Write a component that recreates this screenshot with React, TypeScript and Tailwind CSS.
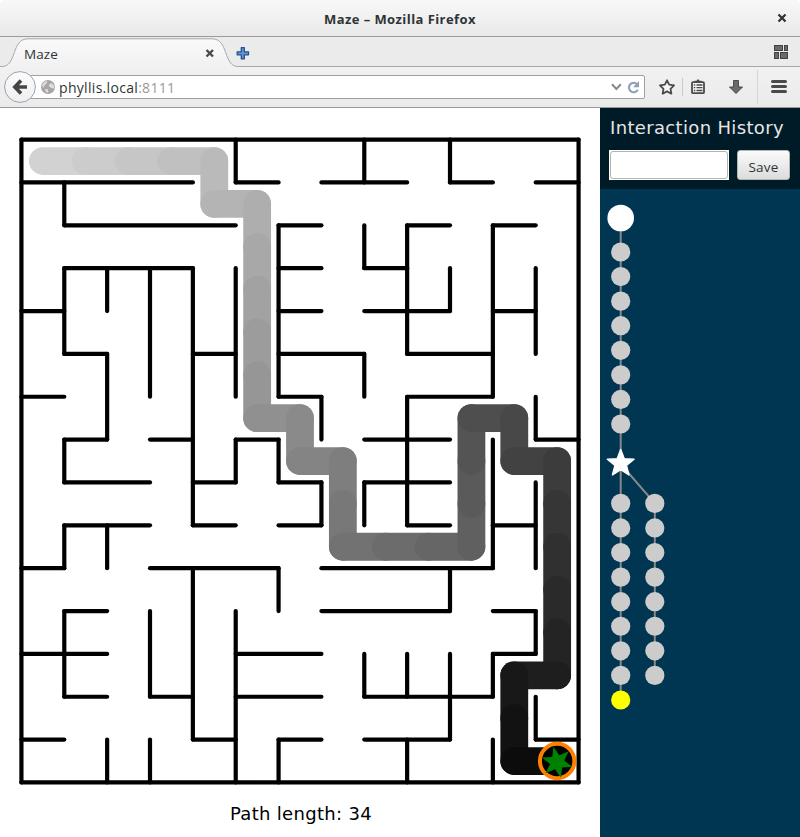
import React from "react";

const STEP = 42.857;
const X0 = 21.43;
const Y0 = 31.6;

const horizontal: number[][][] = [
  [[0, 13]],
  [[0, 4], [5, 6], [7, 9], [10, 11], [12, 13]],
  [[1, 5], [6, 7], [9, 10], [11, 12]],
  [[1, 4], [6, 7], [8, 9]],
  [[0, 1], [6, 7], [8, 10], [11, 12]],
  [[1, 2], [4, 5], [6, 8], [9, 11]],
  [[0, 1], [6, 7], [9, 11]],
  [[1, 2], [3, 4], [5, 6], [8, 10], [12, 13]],
  [[1, 3], [4, 5], [6, 7], [8, 10]],
  [[1, 3], [4, 5], [6, 7], [9, 10], [11, 12]],
  [[0, 1], [3, 6], [7, 11]],
  [[1, 2], [7, 10], [11, 12]],
  [[0, 2], [5, 7], [11, 12]],
  [[1, 2], [3, 4], [5, 7], [8, 11]],
  [[0, 1], [4, 5], [6, 7], [8, 10], [12, 13]],
  [[0, 13]],
];

const vertical: number[][][] = [
  [[0, 15]],
  [[1, 2], [3, 5], [7, 8], [9, 10], [11, 13]],
  [[3, 4], [5, 7], [9, 10], [14, 15]],
  [[3, 6], [11, 13], [14, 15]],
  [[3, 9], [10, 14]],
  [[0, 1], [3, 6], [7, 8], [11, 15]],
  [[2, 6], [7, 8], [10, 11], [14, 15]],
  [[6, 7], [8, 9]],
  [[0, 1], [2, 3], [5, 6], [8, 9], [12, 13]],
  [[2, 5], [6, 9], [12, 13], [14, 15]],
  [[0, 1], [3, 4], [10, 11], [12, 14]],
  [[2, 6], [7, 10], [12, 13], [14, 15]],
  [[3, 5], [6, 7], [8, 10], [11, 12], [13, 14]],
  [[0, 15]],
];

const MOVES = "RRRRDRDDDDDRDRDDRRRUUURDRDDDDDLDDR";

function walk() {
  const cells = [[0, 0]];
  for (const m of MOVES) {
    const [x, y] = cells[cells.length - 1];
    cells.push([x + (m === "R" ? 1 : m === "L" ? -1 : 0), y + (m === "D" ? 1 : m === "U" ? -1 : 0)]);
  }
  return cells;
}

const px = (x: number) => X0 + x * STEP;
const py = (y: number) => Y0 + y * STEP;

function starPoints(cx: number, cy: number, n: number, outer: number, inner: number, rot: number) {
  const pts: string[] = [];
  for (let i = 0; i < n * 2; i++) {
    const r = i % 2 ? inner : outer;
    const a = rot + (Math.PI * i) / n;
    pts.push(`${(cx + r * Math.sin(a)).toFixed(2)},${(cy - r * Math.cos(a)).toFixed(2)}`);
  }
  return pts.join(" ");
}

function Maze() {
  const cells = walk();
  const gx = px(12.5);
  const gy = py(14.5);
  return (
    <svg width="600" height="690" viewBox="0 0 600 690" className="block">
      <g stroke="#000" strokeWidth="4.2" strokeLinecap="round">
        {horizontal.flatMap((row, y) =>
          row.map(([a, b]) => <line key={`h${y}-${a}`} x1={px(a)} x2={px(b)} y1={py(y)} y2={py(y)} />),
        )}
        {vertical.flatMap((col, x) =>
          col.map(([a, b]) => <line key={`v${x}-${a}`} x1={px(x)} x2={px(x)} y1={py(a)} y2={py(b)} />),
        )}
      </g>
      <g strokeWidth="27.8" strokeLinecap="round">
        {cells.slice(1).map(([x, y], i) => {
          const g = Math.round(210 - i * 6);
          const [ax, ay] = cells[i];
          return (
            <line
              key={i}
              x1={px(ax + 0.5)}
              y1={py(ay + 0.5)}
              x2={px(x + 0.5)}
              y2={py(y + 0.5)}
              stroke={`rgb(${g},${g},${g})`}
            />
          );
        })}
      </g>
      <circle cx={gx} cy={gy} r="17.2" fill="#000" stroke="#ff8000" strokeWidth="4" />
      <polygon points={starPoints(gx, gy + 1.2, 6, 16, 7.3, -0.23)} fill="#008000" />
    </svg>
  );
}

function HistoryTree() {
  const d = 24.57;
  const top = Array.from({ length: 8 }, (_, i) => 63 + i * d);
  const low = Array.from({ length: 8 }, (_, i) => 314.4 + i * d);
  return (
    <svg width="200" height="648" viewBox="0 0 200 648" className="block">
      <g stroke="#888" strokeWidth="2">
        <path d="M20.7 29V511M20.7 275L54.8 314.4V486.4" fill="none" />
      </g>
      <circle cx="20.7" cy="29" r="13.3" fill="#fff" />
      <g fill="#ccc">
        {top.map((y) => <circle key={`t${y}`} cx="20.7" cy={y} r="9.6" />)}
        {low.map((y) => <circle key={`a${y}`} cx="20.7" cy={y} r="9.6" />)}
        {low.map((y) => <circle key={`b${y}`} cx="54.8" cy={y} r="9.6" />)}
      </g>
      <polygon
        points={starPoints(20.7, 274.6, 5, 14, 6, 0)}
        fill="#fff"
        stroke="#fff"
        strokeWidth="1.5"
        strokeLinejoin="round"
      />
      <circle cx="20.7" cy="511" r="9.6" fill="#ff0" />
    </svg>
  );
}

function TitleBar() {
  return (
    <div className="grid h-[36px] grid-cols-[1fr_auto_1fr] items-center rounded-t-[5px] bg-linear-to-b from-[#f8f8f8] to-[#e9e9e9]">
      <span />
      <span className="pt-[3px] font-['Open_Sans',sans-serif] text-[13px] font-bold tracking-[0.43px] text-[#2e3436]">
        Maze – Mozilla Firefox
      </span>
      <svg width="10" height="10" viewBox="0 0 10 10" className="mr-[13px] justify-self-end">
        <path d="M1.500 1.500L8.500 8.500M8.500 1.500L1.500 8.500" stroke="#2e3436" strokeWidth="2.3" />
      </svg>
    </div>
  );
}

function TabBar() {
  return (
    <div className="relative h-[31px] border-t border-[#9c9c9c] bg-[#ebebeb]">
      <svg width="800" height="31" viewBox="0 0 800 31" className="absolute top-0 left-0">
        <defs>
          <linearGradient id="tab" x1="0" y1="0" x2="0" y2="1">
            <stop offset="0" stopColor="#fafafa" />
            <stop offset="1" stopColor="#f1f1f1" />
          </linearGradient>
        </defs>
        <path
          d="M0 29.5H2C17 29.5 11 1.8 28 1.8H212C229 1.8 223 29.5 238 29.5H800V31H0Z"
          fill="url(#tab)"
        />
        <path
          d="M0 29.5H2C17 29.5 11 1.8 28 1.8H212C229 1.8 223 29.5 238 29.5H800"
          fill="none"
          stroke="#a3a9b0"
        />
        <path d="M206.5 13L213 19.5M213 13L206.5 19.5" stroke="#4a4a4a" strokeWidth="2.4" />
        <path
          d="M241.3 10.7h3v4.1h4.2v3h-4.2v4.1h-3v-4.1h-4.1v-3h4.1z"
          fill="#6495d2"
          stroke="#27508f"
          strokeWidth="1.3"
          strokeLinejoin="round"
        />
        <g fill="#6a6a6a" stroke="#414141">
          <rect x="774.5" y="8.5" width="8" height="5" />
          <rect x="784.5" y="8.5" width="3" height="5" />
          <rect x="774.5" y="15.5" width="4" height="6" />
          <rect x="780.5" y="15.5" width="7" height="6" />
        </g>
      </svg>
      <span className="relative ml-6 block pt-[8px] font-['Open_Sans',sans-serif] text-[13.5px] leading-[18px] tracking-[0.1px] text-[#2e3436]">
        Maze
      </span>
    </div>
  );
}

function NavBar() {
  return (
    <div className="relative flex h-[41px] border-b border-[#9a9a9a] bg-linear-to-b from-[#f1f1f1] to-[#ebebeb] pt-[8px] pl-[20px]">
      <div className="flex h-[24px] w-[625px] items-center rounded-[2px] border border-[#a0a0a0] bg-white pt-px pl-[38px] font-['Open_Sans',sans-serif] text-[14px] tracking-[0.31px] text-[#2e3436]">
        <span>phyllis.local</span>
        <span className="text-[#999]">:8111</span>
      </div>
      <svg width="800" height="40" viewBox="0 0 800 40" className="absolute top-0 left-0">
        <defs>
          <linearGradient id="back" x1="0" y1="0" x2="0" y2="1">
            <stop offset="0" stopColor="#fcfcfc" />
            <stop offset="1" stopColor="#efefef" />
          </linearGradient>
        </defs>
        <circle cx="20" cy="20" r="15.4" fill="url(#back)" stroke="#97a5b5" />
        <path d="M27 20H16M21 13.5L14.8 20L21 26.5" fill="none" stroke="#454545" strokeWidth="3.6" />
        <circle cx="48" cy="20" r="7" fill="#a6a6a6" />
        <path
          d="M42 18L44.500 14.800L47.500 14L46.500 16.500L44.500 18.500L43.500 21ZM48.500 18.500L51 16L54 18.500L54.300 21.500L51 21ZM44.500 22.500L47.500 22L48.500 24.500L47 26Z"
          fill="#dedede"
        />
        <path d="M612 17.3L616.4 22L620.8 17.3" fill="none" stroke="#888" strokeWidth="2" />
        <path d="M637 17.2A4.700 4.700 0 1 0 637.8 22.8" fill="none" stroke="#91a1b3" strokeWidth="2.2" />
        <path d="M639 14V20.2H633Z" fill="#91a1b3" />
        <polygon
          points={starPoints(667, 20.7, 5, 7.4, 3.7, 0)}
          fill="#f6f6f6"
          stroke="#4a4a4a"
          strokeWidth="1.8"
          strokeLinejoin="round"
        />
        <path d="M682.5 11V29" stroke="#c5cbd2" />
        <rect x="692" y="15.2" width="12" height="11" rx="1" fill="#f6f6f6" stroke="#4a4a4a" strokeWidth="1.8" />
        <path d="M694.5 15.5V13.8H696.500L698 12L699.500 13.8H701.500V15.5Z" fill="#4a4a4a" />
        <path d="M693.8 18H695.3M696.5 18H702.5M693.8 20.7H695.3M696.5 20.7H702.5M693.8 23.5H695.3M696.5 23.5H702.5" stroke="#4a4a4a" strokeWidth="1.3" />
        <path d="M733.5 13.5H738.5V20H742.5L736 26.500L729.500 20H733.5Z" fill="#6a6a6a" stroke="#4a4a4a" />
        <path d="M757.5 3V37" stroke="#d5d5d5" />
        <path d="M772.5 14.5H785.5M772.5 19.500H785.5M772.5 24.500H785.5" stroke="#4a4a4a" strokeWidth="3" strokeLinecap="round" />
      </svg>
    </div>
  );
}

export default function App() {
  return (
    <div className="flex h-[837px] w-[800px] flex-col overflow-hidden bg-white">
      <TitleBar />
      <TabBar />
      <NavBar />
      <div className="flex flex-1">
        <main className="w-[600px] bg-white font-['DejaVu_Sans',sans-serif] text-black">
          <Maze />
          <p className="pl-[2px] text-center text-[18px] leading-[31px] tracking-[0.32px]">Path length: 34</p>
        </main>
        <aside className="w-[200px] bg-[#003651]">
          <div className="h-[81px] bg-[#001b28] px-[9px] pt-[6px]">
            <h1 className="pl-px font-['DejaVu_Sans',sans-serif] text-[18px] leading-[28px] tracking-[0.34px] whitespace-nowrap text-[#e6e6e6]">
              Interaction History
            </h1>
            <div className="mt-[8px] flex gap-[8px]">
              <div className="h-[30px] w-[120px] bg-white p-px">
                <input aria-label="Name" className="block h-[28px] w-[118px] rounded-[3px] border border-[#b4b4ae] bg-white" />
              </div>
              <button className="h-[30px] w-[53px] rounded-[3px] border border-[#b5b5b0] bg-linear-to-b from-[#fbfbfb] to-[#dcdcdc] pt-[4px] font-['Open_Sans',sans-serif] text-[13.5px] leading-[20px] tracking-[0.2px] text-[#2e3436]">
                Save
              </button>
            </div>
          </div>
          <HistoryTree />
        </aside>
      </div>
    </div>
  );
}
